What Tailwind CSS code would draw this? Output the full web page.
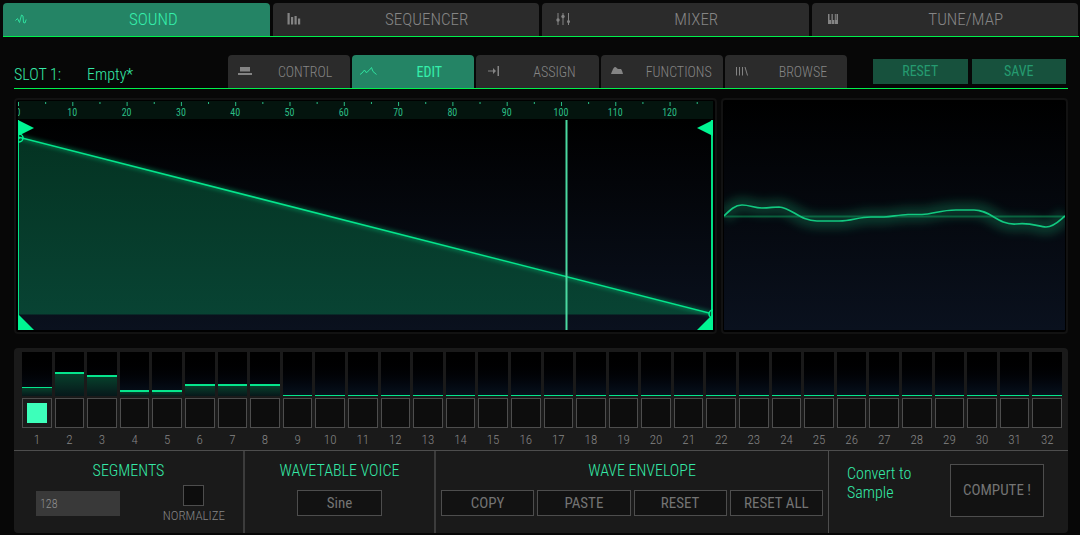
<!DOCTYPE html>
<html lang="en">
<head>
<meta charset="utf-8">
<meta name="viewport" content="width=device-width, initial-scale=1">
<title>Wavetable Editor</title>
<script src="https://cdn.jsdelivr.net/npm/@tailwindcss/browser@4"></script>
</head>
<body class="min-h-screen bg-[#070707] font-['Roboto_Condensed','Liberation_Sans_Narrow','Roboto',sans-serif] font-light text-[#858585]">
<div class="flex min-h-screen flex-col">

  <nav class="mt-[3px] mr-px ml-[3px] grid grid-cols-4 gap-[3px] border-b border-[#00f04c] pr-px" aria-label="Main">
    <button class="relative h-[33px] rounded-t-[4px] bg-[#248465] pl-[34px] text-[17px] text-[#35f0ac]">
      <svg class="absolute top-[10px] left-3 h-3 w-3" viewBox="0 0 12 12" fill="none" stroke="#2fe09e" stroke-width="1"><path d="M.5 7.500 2.500 5.500 4.500 9.500 6.500 2 8 3 8.500 9.500 10 10 11.200 6.500"/></svg>
      SOUND</button>
    <button class="relative h-[33px] rounded-t-[4px] bg-[#2b2b2b] pl-[42px] text-[17px]">
      <svg class="absolute top-[10px] left-[14px] h-3 w-[14px]" viewBox="0 0 13 12" fill="#848484"><path d="M0 0h2.200v11.500H0zM3.500 4h2.200v7.500H3.500zM7 3h2.200v8.500H7zM10.500 5.500h2.200v6h-2.200z"/></svg>
      SEQUENCER</button>
    <button class="relative h-[33px] rounded-t-[4px] bg-[#2b2b2b] pl-[42px] text-[17px]">
      <svg class="absolute top-[9px] left-[14px] h-[14px] w-[14px]" viewBox="0 0 14 14" fill="#848484"><path d="M1.500 1h1v12h-1zM6.500 1h1v12h-1zM12 1h1v12h-1z"/><circle cx="2" cy="8" r="1.700"/><circle cx="7" cy="4.500" r="1.700"/><circle cx="12.500" cy="9.500" r="1.500"/></svg>
      MIXER</button>
    <button class="relative h-[33px] rounded-t-[4px] bg-[#2b2b2b] pl-[42px] text-[17px]">
      <svg class="absolute top-[11px] left-4 h-[10px] w-[10px]" viewBox="0 0 10 10" fill="#848484"><path d="M0 0h1.500v6H3v4H0zM3.500 6V0h1.300v6H6.300v4H3.500zM6.800 6V0h1v6h.700V0H10v10H6.800z"/></svg>
      TUNE/MAP</button>
  </nav>

  <main class="flex flex-1 flex-col pr-3 pl-[14px]">
    <div class="mt-[18px] flex border-b border-[#00f04c]">
      <div class="flex w-[214px] items-center gap-[26px] pt-[6px] text-[16px] text-[#35eaa8]"><span>SLOT 1:</span><span>Empty*</span></div>
      <div class="grid flex-1 grid-cols-5 gap-[2px] text-[14px]" role="group" aria-label="Slot pages">
        <button class="relative h-[33px] rounded-t-[4px] bg-[#2b2b2b] pt-px pl-8">
          <svg class="absolute top-3 left-[10px] h-2 w-[14px]" viewBox="0 0 14 8" fill="#848484"><path d="M2 0h10v4.500H2zM0 6h14v2H0z"/></svg>
          CONTROL</button>
        <button class="relative h-[33px] rounded-t-[4px] bg-[#248465] pt-px pl-8 font-normal text-[#35f0ac]">
          <svg class="absolute top-3 left-2 h-[9px] w-[17px]" viewBox="0 0 17 9" fill="none" stroke="#2fe09e"><path d="M0 7.500 2 6 4.500 3 6 5.500 7.500 5 8.500 3.500 9.500 3 11.500 .500 13 4.500 16.500 7.500"/></svg>
          EDIT</button>
        <button class="relative h-[33px] rounded-t-[4px] bg-[#2b2b2b] pt-px pl-[34px]">
          <svg class="absolute top-[11px] left-3 h-[10px] w-[11px]" viewBox="0 0 11 10" fill="#848484"><path d="M0 4.500h5V2l3 3-3 3V5.500H0zM9.500 0h1.500v10H9.500z"/></svg>
          ASSIGN</button>
        <button class="relative h-[33px] rounded-t-[4px] bg-[#2b2b2b] pt-px pl-[34px]">
          <svg class="absolute top-3 left-[10px] h-[7px] w-3" viewBox="0 0 12 7" fill="#848484"><path d="M0 7C1 4.500 2.500 0 4 0c1.500 0 2 2 3.500 2H10c1 1 1.500 3 2 5z"/></svg>
          FUNCTIONS</button>
        <button class="relative h-[33px] rounded-t-[4px] bg-[#2b2b2b] pt-px pl-[34px]">
          <svg class="absolute top-3 left-[11px] h-[9px] w-3" viewBox="0 0 12 9" fill="none" stroke="#848484"><path d="M.500 0v8.500M3.500 0v8.500M6.500 0v8.500M9 0l2.500 8.500"/></svg>
          BROWSE</button>
      </div>
      <div class="mr-[2px] ml-[26px] grid w-[193px] grid-cols-2 gap-1 py-1 text-[14px] font-normal text-[#259b70]">
        <button class="bg-[#17513d]">RESET</button>
        <button class="bg-[#17513d]">SAVE</button>
      </div>
    </div>

    <div class="mt-[9px] grid grid-cols-[703fr_347fr] gap-1">
      <section class="min-w-0 rounded-[4px] border-2 border-[#121212] bg-black p-[2px] pt-px" aria-label="Wave envelope editor">
        <svg id="ruler" class="block h-[18px] w-full bg-[#04140e] text-[10px] font-normal" fill="#2bbd85" aria-hidden="true"></svg>
        <svg class="mt-px block h-[210px] w-full" viewBox="0 0 695 210" preserveAspectRatio="none">
          <defs>
            <linearGradient id="night" x2="0" y2="1"><stop offset="0" stop-color="#000"/><stop offset="1" stop-color="#0a111e"/></linearGradient>
            <linearGradient id="area" x2="0" y2="1"><stop offset="0" stop-color="#043322"/><stop offset="1" stop-color="#084333"/></linearGradient>
            <filter id="soft" x="-5%" y="-10%" width="110%" height="120%"><feGaussianBlur stdDeviation="2"/></filter>
            <filter id="glow" x="-5%" y="-100%" width="110%" height="300%"><feGaussianBlur stdDeviation="4"/></filter>
          </defs>
          <rect width="695" height="210" fill="url(#night)"/>
          <path d="M0 17 695 194.500H0z" fill="url(#area)"/>
          <path d="M0 17 695 194" fill="none" stroke="#00c477" stroke-width="4" opacity=".45" filter="url(#soft)"/>
          <path d="M0 17 695 194" fill="none" stroke="#05e58c" stroke-width="1.500"/>
          <circle cx="1" cy="18" r="4" fill="none" stroke="#00f592" stroke-width="1.500"/><circle cx="1" cy="18" r="1" fill="#00f592"/>
          <circle cx="695" cy="194" r="4" fill="#064a34" stroke="#00f592" stroke-width="1.500"/>
          <path d="M0 0v210M694 0v210" stroke="#00f592" stroke-width="1.800"/>
          <path d="M0 0 16 8 0 16zM695 0v16L679 8zM0 194 16 210H0zM695 194v16h-16z" fill="#00f592"/>
          <path d="M548.500 0v210" stroke="#4bd9a0" stroke-width="2"/>
        </svg>
      </section>
      <section class="min-w-0 rounded-[4px] border-2 border-[#121212] bg-black px-px pt-px pb-[2px]" aria-label="Waveform">
        <svg class="block h-[229px] w-full" viewBox="0 0 341 229" preserveAspectRatio="none">
          <rect width="341" height="229" fill="url(#night)"/>
          <path d="M0 115.500h341" stroke="#075636" stroke-width="2"/>
          <path d="M0 115C6 109 11 104 18 104C26 104 30 107 38 107C46 107 49 106 55 106C68 107 76 120 93 120H115C128 120 134 116 147 116H160C170 115 176 114 184 113.500H198C209 113 217 109 232 109H250C267 109 273 124 292 123C307 121 315 126 322 126C330 126 336 119 341 115" fill="none" stroke="#159a68" stroke-width="16" opacity=".3" filter="url(#glow)"/>
          <path d="M0 115C6 109 11 104 18 104C26 104 30 107 38 107C46 107 49 106 55 106C68 107 76 120 93 120H115C128 120 134 116 147 116H160C170 115 176 114 184 113.500H198C209 113 217 109 232 109H250C267 109 273 124 292 123C307 121 315 126 322 126C330 126 336 119 341 115" fill="none" stroke="#12c980" stroke-width="1.700"/>
        </svg>
      </section>
    </div>

    <div class="mt-[14px] mb-[2px] flex flex-1 flex-col rounded-[4px] bg-[#1a1a1a]">
      <div id="steps" class="grid grid-cols-[repeat(32,minmax(0,1fr))] gap-[3px] pt-1 pr-[6px] pl-2"></div>
      <div class="grid flex-1 grid-cols-[231fr_191fr_393fr_239fr] border-t border-[#4d4d4d]">
        <section class="border-r-2 border-[#3c3c3c] pt-2">
          <h2 class="text-center text-[16px] leading-6 text-[#35eaa8]">SEGMENTS</h2>
          <div class="flex justify-between pr-[18px] pl-[22px]">
            <input type="text" value="128" aria-label="Segments" class="mt-2 h-[25px] w-[84px] bg-[#393939] px-1 text-[12px] text-[#8f8f8f]">
            <label class="flex flex-col items-center gap-[2px] text-[13px] leading-4"><input type="checkbox" class="mt-[2px] h-[21px] w-[21px] appearance-none border border-[#4d4d4d] bg-[#0d0d0d]"><span>NORMALIZE</span></label>
          </div>
        </section>
        <section class="flex flex-col items-center border-r-2 border-[#3c3c3c] pt-2">
          <h2 class="text-[16px] leading-6 text-[#35eaa8]">WAVETABLE VOICE</h2>
          <select aria-label="Wavetable voice" class="mt-[7px] h-[26px] w-[85px] appearance-none border border-[#4d4d4d] bg-[#121212] text-center text-[15px] font-normal text-[#747474]"><option>Sine</option></select>
        </section>
        <section class="border-r border-[#4d4d4d] px-[5px] pt-2">
          <h2 class="pl-5 text-center text-[16px] leading-6 text-[#35eaa8]">WAVE ENVELOPE</h2>
          <div class="mt-[7px] grid grid-cols-4 gap-[3px] text-[15px] font-normal text-[#747474]">
            <button class="h-[26px] border border-[#4d4d4d] bg-[#121212]">COPY</button>
            <button class="h-[26px] border border-[#4d4d4d] bg-[#121212]">PASTE</button>
            <button class="h-[26px] border border-[#4d4d4d] bg-[#121212]">RESET</button>
            <button class="h-[26px] border border-[#4d4d4d] bg-[#121212]">RESET ALL</button>
          </div>
        </section>
        <section class="flex items-start justify-between pt-[13px] pr-6 pl-[18px]">
          <h2 class="w-[90px] text-[16px] leading-[19px] text-[#35eaa8]">Convert to Sample</h2>
          <button class="h-[53px] w-[94px] border border-[#4d4d4d] bg-[#121212] text-[15px] font-normal text-[#747474]">COMPUTE !</button>
        </section>
      </div>
    </div>
  </main>
</div>
<script>
  // Ruler ticks: one every 5 segments, a label every 10.
  let marks = '';
  for (let n = 0; n < 128; n += 5) {
    const x = n / 128 * 100 + '%';
    marks += `<rect x="${x}" y="1" width="1" height="${n % 10 ? 2 : 4}"/>`;
    if (n % 10 === 0) marks += `<text x="${x}" y="15" text-anchor="middle">${n}</text>`;
  }
  document.getElementById('ruler').innerHTML = marks;

  // Level of each wavetable step, in pixels above the bottom of its slot.
  const levels = [9, 24, 21, 6, 6, 12, 12, 12];
  let steps = '';
  for (let i = 0; i < 32; i++) {
    const line = i === 0 || i > 7 ? 'border-t' : 'border-t-2';
    steps += `<label class="flex flex-col items-center text-[13px] leading-4">
      <span class="flex h-11 w-full flex-col justify-end bg-linear-to-b from-black to-[#08121e]">
        <span class="block ${line} border-[#05e58c] bg-linear-to-b from-[#06402b] to-[#06181a]" style="height:${levels[i] || 1}px"></span>
      </span>
      <input type="radio" name="step" ${i ? '' : 'checked'} class="mt-[2px] h-[30px] w-full appearance-none border border-[#4d4d4d] bg-[#0d0d0d] bg-clip-content checked:bg-[#3dffba] checked:p-1">
      <span class="pt-1 pb-[2px]">${i + 1}</span></label>`;
  }
  document.getElementById('steps').innerHTML = steps;
</script>
</body>
</html>
